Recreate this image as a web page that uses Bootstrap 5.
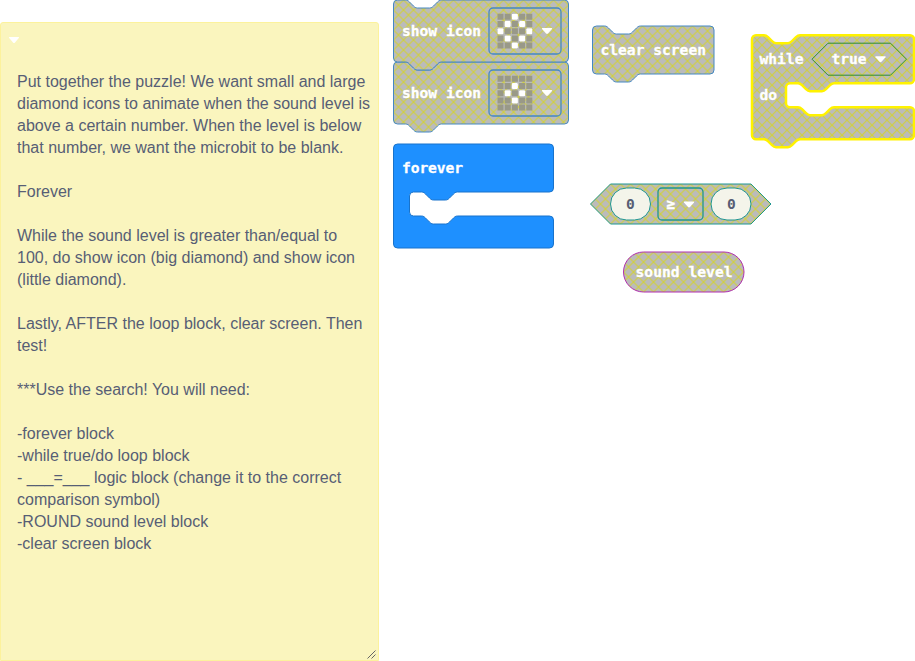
<!DOCTYPE html>
<html lang="en">
<head>
<meta charset="utf-8">
<meta name="viewport" content="width=device-width, initial-scale=1">
<title>Sound level puzzle</title>
<link rel="stylesheet" href="https://cdn.jsdelivr.net/npm/bootstrap@5.3.0/dist/css/bootstrap.min.css">
<style>
body{background:#fff;width:915px;height:661px}
.note{width:379px;height:639px;margin-top:22px;padding:13px 0 0 7px;background:#faf5be;border:1px solid #fcf29c;border-top-left-radius:3px;border-top-right-radius:3px}
.note-toggle{display:block;width:12px;height:8px}
.note-text{font:16px/22px "Liberation Sans",Arial,sans-serif;color:#575e75;white-space:pre-line;padding:27px 6px 0 9px}
.note-text p{margin:0 0 22px}
.note-grip{right:2px;bottom:1px}
.board text{font:bold 14.6px "DejaVu Sans Mono",monospace;fill:#fff;stroke:#fff;stroke-width:.3px}
.board .num{fill:#575e75;stroke:none}
.board svg{display:block}
.hatch{fill:url(#hatch)}
.basic{stroke:#4488c4}
.logic{stroke:#1f9590}
</style>
<script src="https://cdn.jsdelivr.net/npm/bootstrap@5.3.0/dist/js/bootstrap.bundle.min.js"></script>
</head>
<body class="d-flex overflow-hidden">
<aside class="note position-relative flex-shrink-0">
<svg class="note-toggle" viewBox="0 0 12 8"><path d="M1.500 1h9q1 0 .3 1L7 6.500q-1 1-2 0L1.200 2q-.7-1 .3-1z" fill="#fff"/></svg>
<div class="note-text"><p>Put together the puzzle! We want small and large diamond icons to animate when the sound level is above a certain number. When the level is below that number, we want the microbit to be blank.</p><p>Forever</p><p>While the sound level is greater than/equal to 100, do show icon (big diamond) and show icon (little diamond).</p><p>Lastly, AFTER the loop block, clear screen. Then test!</p><p>***Use the search! You will need:</p><p>-forever block
-while true/do loop block
- ___=___ logic block (change it to the correct comparison symbol)
-ROUND sound level block
-clear screen block</p></div>
<svg class="note-grip position-absolute" width="9" height="9" viewBox="0 0 9 9"><path d="M.5 8.500l8-8M4.500 8.500l4-4" stroke="#666" fill="none"/></svg>
</aside>
<main class="board flex-grow-1">
<svg width="536" height="661" viewBox="379 0 536 661">
<defs>
<pattern id="hatch" width="10" height="10" patternUnits="userSpaceOnUse"><rect width="10" height="10" fill="#bbb"/><path d="M-1 -1L11 11M11 -1L-1 11" stroke="#d0d040" stroke-width="1.200"/></pattern>
<path id="arrow" d="M1 0h9q1.200 0 .5 1L6.500 5.600q-1 .9-2 0L.5 1Q-.2 0 1 0z" fill="#fff"/>
<g id="leds" fill="#999988"><path d="M0 0h6v6H0zM7.200 0h6v6h-6zM14.400 0h6v6h-6zM21.600 0h6v6h-6zM28.800 0h6v6h-6z"/></g>
<g id="grid"><use href="#leds"/><use href="#leds" y="7.200"/><use href="#leds" y="14.400"/><use href="#leds" y="21.600"/><use href="#leds" y="28.800"/></g>
<rect id="on" width="6" height="6" rx="1" fill="#fff"/>
<path id="stack" d="M0 4a4 4 0 0 1 4-4h8c2 0 3 1 4 2l4 4c1 1 2 2 4 2h12c2 0 3-1 4-2l4-4c1-1 2-2 4-2h123a4 4 0 0 1 4 4v54a4 4 0 0 1-4 4H48c-2 0-3 1-4 2l-4 4c-1 1-2 2-4 2H24c-2 0-3-1-4-2l-4-4c-1-1-2-2-4-2H4a4 4 0 0 1-4-4z"/>
</defs>
<g>
<g transform="translate(393.500 62)"><use href="#stack" class="hatch basic"/><rect x="95.500" y="8" width="72" height="46" rx="4" class="hatch basic" stroke-width="1.300"/><text x="8.500" y="36.300" textLength="79">show icon</text><g transform="translate(104 13.800)"><use href="#grid"/><use href="#on" x="14.400" y="7.200"/><use href="#on" x="7.200" y="14.400"/><use href="#on" x="21.600" y="14.400"/><use href="#on" x="14.400" y="21.600"/></g><use href="#arrow" x="148" y="28"/></g>
<g transform="translate(393.500 0)"><use href="#stack" class="hatch basic"/><rect x="95.500" y="8" width="72" height="46" rx="4" class="hatch basic" stroke-width="1.300"/><text x="8.500" y="36.300" textLength="79">show icon</text><g transform="translate(104 13.800)"><use href="#grid"/><use href="#on" x="14.400"/><use href="#on" x="7.200" y="7.200"/><use href="#on" x="21.600" y="7.200"/><use href="#on" y="14.400"/><use href="#on" x="28.800" y="14.400"/><use href="#on" x="7.200" y="21.600"/><use href="#on" x="21.600" y="21.600"/><use href="#on" x="14.400" y="28.800"/></g><use href="#arrow" x="148" y="28"/></g>
</g>
<g transform="translate(393.500 144)"><path d="M0 4a4 4 0 0 1 4-4H156a4 4 0 0 1 4 4v40a4 4 0 0 1-4 4H64c-2 0-3 1-4 2l-4 4c-1 1-2 2-4 2H40c-2 0-3-1-4-2l-4-4c-1-1-2-2-4-2h-8a4 4 0 0 0-4 4v16a4 4 0 0 0 4 4h8c2 0 3 1 4 2l4 4c1 1 2 2 4 2h12c2 0 3-1 4-2l4-4c1-1 2-2 4-2h92a4 4 0 0 1 4 4v24a4 4 0 0 1-4 4H4a4 4 0 0 1-4-4z" fill="#1e90ff" stroke="#1873cc"/><text x="8.500" y="29.300" textLength="61">forever</text></g>
<g transform="translate(592.500 26)"><path class="hatch basic" d="M0 4a4 4 0 0 1 4-4h8c2 0 3 1 4 2l4 4c1 1 2 2 4 2h12c2 0 3-1 4-2l4-4c1-1 2-2 4-2h69.500a4 4 0 0 1 4 4v40a4 4 0 0 1-4 4H48c-2 0-3 1-4 2l-4 4c-1 1-2 2-4 2H24c-2 0-3-1-4-2l-4-4c-1-1-2-2-4-2H4a4 4 0 0 1-4-4z"/><text x="8" y="29.300" textLength="105.500">clear screen</text></g>
<g transform="translate(752 35.200)"><path class="hatch" stroke="#fff200" stroke-width="2.500" d="M0 4a4 4 0 0 1 4-4h8c2 0 3 1 4 2l4 4c1 1 2 2 4 2h12c2 0 3-1 4-2l4-4c1-1 2-2 4-2H158a4 4 0 0 1 4 4v40a4 4 0 0 1-4 4H82c-2 0-3 1-4 2l-4 4c-1 1-2 2-4 2H58c-2 0-3-1-4-2l-4-4c-1-1-2-2-4-2h-8a4 4 0 0 0-4 4v16a4 4 0 0 0 4 4h8c2 0 3 1 4 2l4 4c1 1 2 2 4 2h12c2 0 3-1 4-2l4-4c1-1 2-2 4-2h76a4 4 0 0 1 4 4v24a4 4 0 0 1-4 4H48c-2 0-3 1-4 2l-4 4c-1 1-2 2-4 2H24c-2 0-3-1-4-2l-4-4c-1-1-2-2-4-2H4a4 4 0 0 1-4-4z"/><path class="hatch" stroke="#2f8f2f" d="M60 24L76 8h62.500l16 16-16 16H76z"/><text x="7.500" y="29.100" textLength="44">while</text><text x="79.500" y="29.100" textLength="35">true</text><use href="#arrow" x="123" y="21"/><text x="7.500" y="65.100" textLength="17.500">do</text></g>
<g transform="translate(590.500 184)"><path class="hatch logic" d="M0 20L20 0h140.500l20 20-20 20H20z"/><rect class="logic" x="20" y="4" width="40" height="32" rx="16" fill="#f4f4ea"/><rect class="hatch logic" x="67.500" y="4" width="45" height="32" rx="4" stroke-width="1.300"/><rect class="logic" x="120.500" y="4" width="40" height="32" rx="16" fill="#f4f4ea"/><text class="num" x="35.500" y="25.300">0</text><text x="76" y="25.300">≥</text><use href="#arrow" x="93" y="17.500"/><text class="num" x="136.500" y="25.300">0</text></g>
<g transform="translate(623.500 252)"><rect class="hatch" width="120.500" height="40" rx="20" stroke="#b02fb0"/><text x="12" y="25.300" textLength="97">sound level</text></g>
</svg>
</main>
</body>
</html>
